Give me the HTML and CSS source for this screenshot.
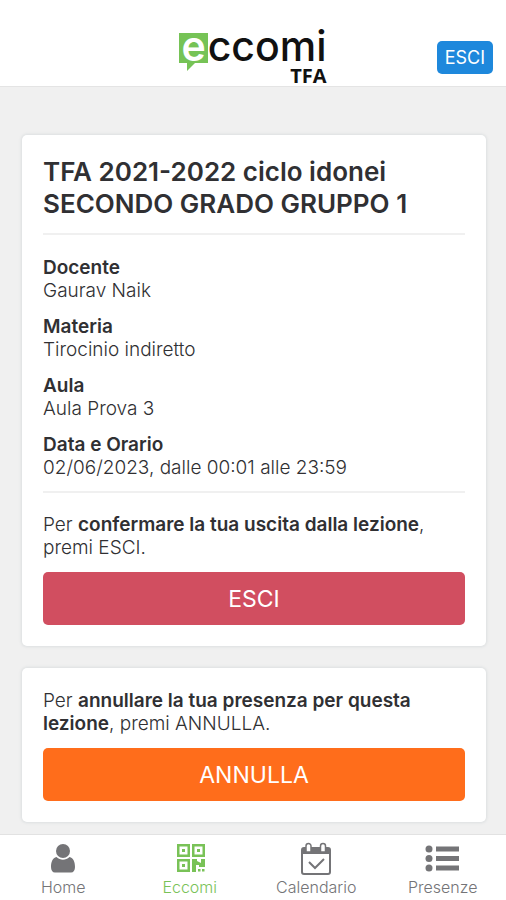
FILE: index.html
```html
<!DOCTYPE html>
<html lang="it">
<head>
    <meta charset="UTF-8">
    <meta name="viewport" content="width=device-width, initial-scale=1.0">
    <title>Eccomi TFA</title>
    <link rel="stylesheet" href="styles.css">
</head>
<body>
    <header class="topbar">
        <div class="logo">
            <div class="logo-name"><span class="logo-e">e</span><span>ccomi</span></div>
            <div class="logo-sub">TFA</div>
        </div>
        <button class="logout-btn" type="button">ESCI</button>
    </header>

    <main class="content">
        <section class="card">
            <h1>TFA 2021-2022 ciclo idonei SECONDO GRADO GRUPPO 1</h1>
            <dl class="details">
                <div><dt>Docente</dt><dd>Gaurav Naik</dd></div>
                <div><dt>Materia</dt><dd>Tirocinio indiretto</dd></div>
                <div><dt>Aula</dt><dd>Aula Prova 3</dd></div>
                <div><dt>Data e Orario</dt><dd>02/06/2023, dalle 00:01 alle 23:59</dd></div>
            </dl>
            <p>Per <strong>confermare la tua uscita dalla lezione</strong>, premi ESCI.</p>
            <button class="action-btn exit-btn" type="button">ESCI</button>
        </section>

        <section class="card">
            <p>Per <strong>annullare la tua presenza per questa lezione</strong>, premi ANNULLA.</p>
            <button class="action-btn cancel-btn" type="button">ANNULLA</button>
        </section>
    </main>

    <!-- Barra di navigazione -->
    <nav class="tabbar">
        <a href="#home">
            <svg viewBox="0 0 36 36" fill="currentColor" aria-hidden="true">
                <circle cx="18" cy="11" r="7"/>
                <path d="M11.500 17c4 3.500 9 3.500 13 0 4 1 5.500 5 5.500 10 0 3.500-1.500 5.500-4 5.500H10c-2.500 0-4-2-4-5.500 0-5 1.500-9 5.500-10z"/>
            </svg>
            Home
        </a>
        <a href="#eccomi" class="active">
            <svg viewBox="0 0 36 36" fill="currentColor" aria-hidden="true">
                <path fill-rule="evenodd" d="M5 4h13v13H5zM7.500 6.500v8h8v-8zM20 4h13v13H20zM22.500 6.500v8h8v-8zM5 19h13v13H5zM7.500 21.500v8h8v-8z"/>
                <path d="M10 9h3v3h-3zM25 9h3v3h-3zM10 24h3v3h-3zM20 19h5v2l4 2v-4h4v8h-6v-2h-3v7h-4zM26 29h2.500v2.500H26zM30 29h2.500v2.500H30z"/>
            </svg>
            Eccomi
        </a>
        <a href="#calendario">
            <svg viewBox="0 0 36 36" fill="none" stroke="currentColor" aria-hidden="true">
                <rect x="4" y="8" width="28" height="26" rx="2" stroke-width="2"/>
                <path d="M4 8h28v6H4z" fill="currentColor" stroke="none"/>
                <path d="M8 12V6a2.500 2.500 0 0 1 5 0v6zM22.500 12V6a2.500 2.500 0 0 1 5 0v6z" fill="#fff" stroke-width="1.500"/>
                <path d="M11 22l6 6 9-9" stroke-width="2"/>
            </svg>
            Calendario
        </a>
        <a href="#presenze">
            <svg viewBox="0 0 36 36" fill="currentColor" aria-hidden="true">
                <circle cx="4" cy="9" r="3.500"/>
                <circle cx="4" cy="18.500" r="3.500"/>
                <circle cx="4" cy="28" r="3.500"/>
                <path d="M11 6.500h23v5H11zM11 16h23v5H11zM11 25.500h23v5H11z"/>
            </svg>
            Presenze
        </a>
    </nav>
</body>
</html>
```
FILE: styles.css
```css
* {
    box-sizing: border-box;
}
body {
    display: flex;
    flex-direction: column;
    min-height: 100vh;
    margin: 0;
    background-color: #f0f0f0;
    color: #303033;
    font-family: Inter, sans-serif;
    font-size: 19px;
    font-weight: 300;
    line-height: 23px;
}
.topbar {
    display: grid;
    grid-template-columns: 1fr auto 1fr;
    padding: 26px 13px 1px;
    border-bottom: 1px solid #e4e4e4;
    background-color: #fff;
}
.logo {
    grid-column: 2;
    color: #111;
}
.logo-name {
    display: flex;
    font-size: 41px;
    font-weight: 500;
    line-height: 40px;
}
.logo-e {
    position: relative;
    height: 30px;
    margin-top: 7px;
    padding: 0 2px;
    background-color: #76c356;
    color: #fff;
    font-weight: 600;
    line-height: 26px;
}
/* Punta del fumetto */
.logo-e::after {
    content: "";
    position: absolute;
    top: 100%;
    left: 8px;
    border-top: 8px solid #76c356;
    border-right: 8px solid transparent;
}
.logo-sub {
    font-family: "Open Sans", sans-serif;
    font-size: 20px;
    font-weight: 700;
    line-height: 19px;
    text-align: right;
}
button {
    border: none;
    border-radius: 5px;
    color: #fff;
    font-family: inherit;
    cursor: pointer;
}
.logout-btn {
    align-self: end;
    justify-self: end;
    height: 33px;
    margin-bottom: 11px;
    padding: 0 8px;
    background-color: #1e88dc;
    font-size: 18px;
}
.content {
    flex: 1;
    display: flex;
    flex-direction: column;
    gap: 22px;
    padding: 48px 20px 12px 22px;
}
.card {
    padding: 21px;
    border-radius: 5px;
    background-color: #fff;
    box-shadow: 0 0 3px 1px #dcdfe0;
}
h1 {
    margin: 0;
    padding-bottom: 13px;
    font-size: 26px;
    font-weight: 600;
    line-height: 32px;
}
.details {
    display: flex;
    flex-direction: column;
    gap: 13px;
    margin: 0 0 20px;
    padding: 21px 0 12px;
    border-top: 2px solid #f0f0f0;
    border-bottom: 2px solid #f0f0f0;
}
dt, strong {
    font-weight: 600;
}
dd {
    margin: 0;
}
p {
    margin: 0 0 13px;
}
.action-btn {
    display: block;
    width: 100%;
    height: 53px;
    font-size: 23px;
}
.exit-btn {
    background-color: #d14e60;
}
.cancel-btn {
    background-color: #ff6d1b;
}
.tabbar {
    position: sticky;
    bottom: 0;
    display: grid;
    grid-template-columns: repeat(4, 1fr);
    border-top: 1px solid #e2e2e2;
    background-color: #fff;
}
.tabbar a {
    display: flex;
    flex-direction: column;
    align-items: center;
    padding: 5px 0 1px;
    color: #747477;
    font-size: 16px;
    text-decoration: none;
}
.tabbar svg {
    width: 36px;
    height: 36px;
}
.tabbar .active {
    color: #79c257;
}
```
